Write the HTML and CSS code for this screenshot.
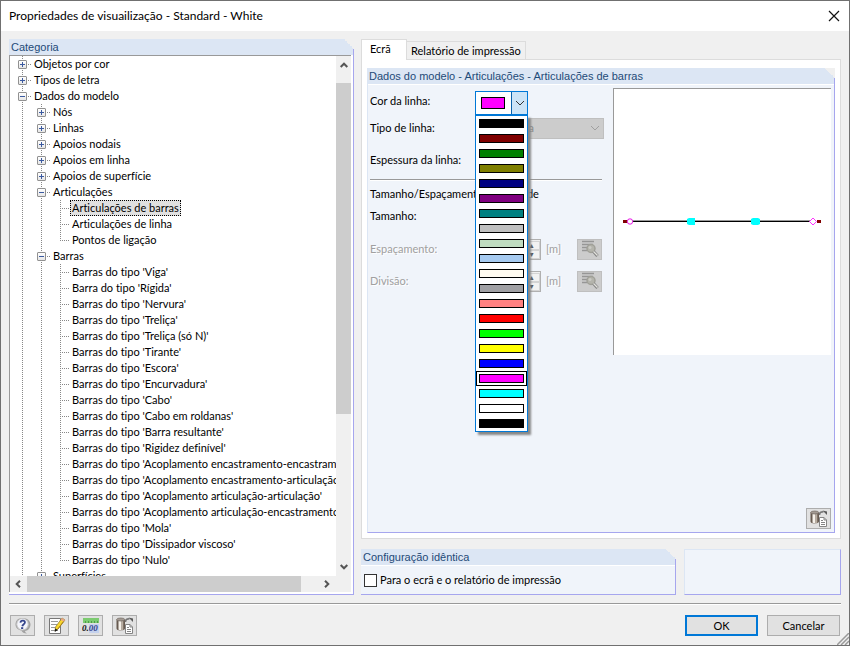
FILE: index.html
```html
<!DOCTYPE html>
<html lang="pt">
<head>
<meta charset="utf-8">
<meta name="viewport" content="width=device-width, initial-scale=1">
<title>Propriedades de visuailização - Standard - White</title>
<link rel="stylesheet" href="styles.css">
</head>
<body>
<svg class="defs" width="0" height="0" aria-hidden="true">
  <symbol id="i-copy" viewBox="0 0 18 18">
    <path d="M0.500 2.500v9c0 1.200 1.500 2 4 2s4.500-.8 4.500-2v-9z" fill="#675a50"/>
    <path d="M2.500 3h3v10.400l-3-.6z" fill="#f6f1ea"/>
    <path d="M5.500 3h1.800v10H5.500z" fill="#b9aea2"/>
    <ellipse cx="4.700" cy="2.500" rx="4" ry="1.500" fill="#a39a92" stroke="#6e665f" stroke-width=".7"/>
    <path d="M9.500 5c0-3 2-3.500 4-3" fill="none" stroke="#777" stroke-width="1.600"/>
    <path d="M12.500 0.500l4.500 1v3.500z" fill="#5a5a5a"/>
    <path d="M9.500 7.500h4.500l2.500 2.500v6.500h-7z" fill="#fff" stroke="#858585"/>
    <path d="M14 7.500V10h2.500M11 10.500h2M11 12.500h4M11 14.500h4" fill="none" stroke="#858585"/>
  </symbol>
  <symbol id="i-pick" viewBox="0 0 18 18">
    <path d="M1 1.500h12M1 4.500h11M1 7.500h5M1 10.500h5" stroke="#969696" stroke-width="1.300"/>
    <circle cx="10" cy="8.500" r="4" fill="#b4b4ac" stroke="#a0a098" stroke-width="1.500"/>
    <circle cx="9" cy="7.500" r="1.500" fill="#cacac4"/>
    <path d="M12.500 11.500l4 4.500" stroke="#858585" stroke-width="3.200"/>
    <path d="M12.500 11.500l4 4" stroke="#e2e2dc" stroke-width="1.300"/>
  </symbol>
  <symbol id="i-down" viewBox="0 0 10 10"><path d="M1 3l4 4 4-4" fill="none" stroke="currentColor"/></symbol>
  <symbol id="i-scroll" viewBox="0 0 10 10"><path d="M1.700 7L5 3.700 8.300 7" fill="none" stroke="#555" stroke-width="2"/></symbol>
</svg>
<div class="window">
  <header class="titlebar">
    <h1>Propriedades de visuailização - Standard - White</h1>
    <button class="close" type="button" aria-label="Fechar"><svg viewBox="0 0 12 12" width="12" height="12"><path d="M1 1l10 10M11 1L1 11" stroke="#111" stroke-width="1.200"/></svg></button>
  </header>

  <main class="content">
    <section class="group categories">
      <h2>Categoria</h2>
      <div class="treebox">
        <nav class="tree" aria-label="Categoria">
          <ul>
            <li><button class="toggle" type="button" aria-label="Expandir"></button><span>Objetos por cor</span></li>
            <li><button class="toggle" type="button" aria-label="Expandir"></button><span>Tipos de letra</span></li>
            <li><button class="toggle open" type="button" aria-label="Recolher"></button><span>Dados do modelo</span>
              <ul>
                <li><button class="toggle" type="button" aria-label="Expandir"></button><span>Nós</span></li>
                <li><button class="toggle" type="button" aria-label="Expandir"></button><span>Linhas</span></li>
                <li><button class="toggle" type="button" aria-label="Expandir"></button><span>Apoios nodais</span></li>
                <li><button class="toggle" type="button" aria-label="Expandir"></button><span>Apoios em linha</span></li>
                <li><button class="toggle" type="button" aria-label="Expandir"></button><span>Apoios de superfície</span></li>
                <li><button class="toggle open" type="button" aria-label="Recolher"></button><span>Articulações</span>
                  <ul>
                    <li><span class="selected">Articulações de barras</span></li>
                    <li><span>Articulações de linha</span></li>
                    <li><span>Pontos de ligação</span></li>
                  </ul>
                </li>
                <li><button class="toggle open" type="button" aria-label="Recolher"></button><span>Barras</span>
                  <ul>
                    <li><span>Barras do tipo 'Viga'</span></li>
                    <li><span>Barra do tipo 'Rígida'</span></li>
                    <li><span>Barras do tipo 'Nervura'</span></li>
                    <li><span>Barras do tipo 'Treliça'</span></li>
                    <li><span>Barras do tipo 'Treliça (só N)'</span></li>
                    <li><span>Barras do tipo 'Tirante'</span></li>
                    <li><span>Barras do tipo 'Escora'</span></li>
                    <li><span>Barras do tipo 'Encurvadura'</span></li>
                    <li><span>Barras do tipo 'Cabo'</span></li>
                    <li><span>Barras do tipo 'Cabo em roldanas'</span></li>
                    <li><span>Barras do tipo 'Barra resultante'</span></li>
                    <li><span>Barras do tipo 'Rigidez definível'</span></li>
                    <li><span>Barras do tipo 'Acoplamento encastramento-encastramento'</span></li>
                    <li><span>Barras do tipo 'Acoplamento encastramento-articulação'</span></li>
                    <li><span>Barras do tipo 'Acoplamento articulação-articulação'</span></li>
                    <li><span>Barras do tipo 'Acoplamento articulação-encastramento'</span></li>
                    <li><span>Barras do tipo 'Mola'</span></li>
                    <li><span>Barras do tipo 'Dissipador viscoso'</span></li>
                    <li><span>Barras do tipo 'Nulo'</span></li>
                  </ul>
                </li>
                <li><button class="toggle" type="button" aria-label="Expandir"></button><span>Superfícies</span></li>
              </ul>
            </li>
          </ul>
        </nav>
        <div class="vscroll">
          <svg class="up" width="10" height="10"><use href="#i-scroll"/></svg>
          <div class="track"><div class="thumb"></div></div>
          <svg class="down" width="10" height="10"><use href="#i-scroll"/></svg>
        </div>
        <div class="hscroll">
          <svg class="left" width="10" height="10"><use href="#i-scroll"/></svg>
          <div class="track"><div class="thumb"></div></div>
          <svg class="right" width="10" height="10"><use href="#i-scroll"/></svg>
        </div>
      </div>
    </section>

    <div class="side">
      <div class="tabs" role="tablist">
        <button class="tab active" type="button" role="tab" aria-selected="true">Ecrã</button>
        <button class="tab" type="button" role="tab" aria-selected="false">Relatório de impressão</button>
      </div>
      <div class="page">
        <section class="group model">
          <h2>Dados do modelo - Articulações - Articulações de barras</h2>
          <div class="model-body">
            <form class="form">
              <div class="row first">
                <label for="color">Cor da linha:</label>
                <div class="combo">
                  <button id="color" class="combo-button" type="button" aria-haspopup="listbox" aria-expanded="true">
                    <span class="current"></span>
                    <span class="arrow"><svg width="10" height="10"><use href="#i-down"/></svg></span>
                  </button>
                  <ul class="colors" role="listbox" aria-label="Cor da linha">
                    <li role="option"><i class="black"></i></li>
                    <li role="option"><i class="maroon"></i></li>
                    <li role="option"><i class="green"></i></li>
                    <li role="option"><i class="olive"></i></li>
                    <li role="option"><i class="navy"></i></li>
                    <li role="option"><i class="purple"></i></li>
                    <li role="option"><i class="teal"></i></li>
                    <li role="option"><i class="silver"></i></li>
                    <li role="option"><i class="mint"></i></li>
                    <li role="option"><i class="sky"></i></li>
                    <li role="option"><i class="cream"></i></li>
                    <li role="option"><i class="gray"></i></li>
                    <li role="option"><i class="salmon"></i></li>
                    <li role="option"><i class="red"></i></li>
                    <li role="option"><i class="lime"></i></li>
                    <li role="option"><i class="yellow"></i></li>
                    <li role="option"><i class="blue"></i></li>
                    <li role="option" aria-selected="true"><i class="magenta"></i></li>
                    <li role="option"><i class="cyan"></i></li>
                    <li role="option"><i class="white"></i></li>
                    <li role="option"><i class="black"></i></li>
                  </ul>
                </div>
              </div>
              <div class="row">
                <label for="type">Tipo de linha:</label>
                <div class="select">
                  <select id="type" disabled><option>Contínua</option></select>
                  <svg width="10" height="10"><use href="#i-down"/></svg>
                </div>
              </div>
              <div class="row weight"><label for="weight">Espessura da linha:</label><input id="weight" class="number" value="1"></div>
              <hr>
              <h3>Tamanho/Espaçamento da unidade</h3>
              <div class="row short"><label for="size">Tamanho:</label><input id="size" class="number" value="1"></div>
              <div class="row tall off">
                <label for="spacing">Espaçamento:</label>
                <div class="spin"><input id="spacing" disabled><span><button type="button" disabled aria-label="Mais">▲</button><button type="button" disabled aria-label="Menos">▼</button></span></div>
                <span class="unit">[m]</span>
                <button class="tool" type="button" disabled aria-label="Selecionar espaçamento"><svg width="18" height="18"><use href="#i-pick"/></svg></button>
              </div>
              <div class="row tall off">
                <label for="division">Divisão:</label>
                <div class="spin"><input id="division" disabled><span><button type="button" disabled aria-label="Mais">▲</button><button type="button" disabled aria-label="Menos">▼</button></span></div>
                <span class="unit">[m]</span>
                <button class="tool" type="button" disabled aria-label="Selecionar divisão"><svg width="18" height="18"><use href="#i-pick"/></svg></button>
              </div>
            </form>
            <div class="aside">
              <div class="preview">
                <svg viewBox="0 0 217 266" role="img" aria-label="Pré-visualização">
                  <path d="M16 131h184v1H16z" fill="#999"/>
                  <path d="M16 132h184v1H16z"/>
                  <path d="M9 131h5v3H9zM203 131h4v3h-4z" fill="#800000"/>
                  <circle cx="16" cy="132.500" r="2.700" fill="#fff" stroke="#e818e8"/>
                  <path d="M73 130l2-1h6v7h-6l-2-1zM137 130l2-1h5l2 1v5l-2 1h-5l-2-1z" fill="#0ff"/>
                  <path d="M199 129l3.500 3.500-3.500 3.500-3.500-3.500z" fill="#fff" stroke="#f3f"/>
                </svg>
              </div>
              <button class="tool" type="button" aria-label="Copiar"><svg width="18" height="18"><use href="#i-copy"/></svg></button>
            </div>
          </div>
        </section>
      </div>
      <div class="lower">
        <section class="group same">
          <h2>Configuração idêntica</h2>
          <label class="check"><input type="checkbox">Para o ecrã e o relatório de impressão</label>
        </section>
        <section class="group blank"></section>
      </div>
    </div>
  </main>

  <footer class="footer">
    <button class="tool" type="button" aria-label="Ajuda"><svg width="18" height="18" viewBox="0 0 18 18"><path d="M8.500 1c4.500 0 8 2.800 8 6.500S13.500 14 11 14c0 1 1 2 2 2.500-3 0-5-1.200-5.500-3C4 13 1.500 10.700 1.500 7.500 1.500 3.800 4 1 8.500 1z" fill="#a2a2a2"/><circle cx="8.500" cy="7.300" r="5.700" fill="#f4f5fb" stroke="#c9c9c9"/><path d="M6.400 5.700c.3-3 5-2.600 4.500 0C10.600 7.300 8.700 7.200 8.300 9.200" fill="none" stroke="#34448c" stroke-width="1.800"/><path d="M7.100 10.200h2.100v1.800H7.100z" fill="#34448c"/></svg></button>
    <button class="tool" type="button" aria-label="Editar"><svg width="18" height="18" viewBox="0 0 18 18"><path d="M1.500 1.500h11v15h-11z" fill="#fff" stroke="#777"/><path d="M3 4.500h7M3 7.500h6M3 10.500h4M3 13.500h7" stroke="#999"/><path d="M14 1l3 2-7 9-3 2 .5-4z" fill="#f9d72c" stroke="#85712a" stroke-width=".7"/><path d="M14 1l3 2-1.300 1.800-3-2z" fill="#e8a58c"/><path d="M7.300 11.500L6.700 15l3-2z" fill="#111"/><path d="M15.500 4.500l-6 8" stroke="#a8801e"/></svg></button>
    <button class="tool" type="button" aria-label="Unidades"><svg width="18" height="18" viewBox="0 0 18 18"><path d="M1 1h16v5H1z" fill="#7ccb70"/><path d="M3.500 4v2M6.500 4v2M9.500 4v2M12.500 4v2M15.500 4v2" stroke="#4e9a48"/><path d="M7 7h10v9H7z" fill="#c5d2ee"/><text x="0" y="14">0.<tspan class="decimals">00</tspan></text></svg></button>
    <button class="tool" type="button" aria-label="Copiar"><svg width="18" height="18"><use href="#i-copy"/></svg></button>
    <span class="fill"></span>
    <button class="action default" type="button">OK</button>
    <button class="action" type="button">Cancelar</button>
  </footer>
  <svg class="grip" width="12" height="12" viewBox="0 0 12 12" aria-hidden="true"><path d="M0 12L12 0M4 12l8-8M8 12l4-4" stroke="#999" stroke-width="1.500"/></svg>
</div>
</body>
</html>
```
FILE: styles.css
```css
* { box-sizing: border-box; }
body { margin: 0; font: 11px/16px Lato, "Liberation Sans", sans-serif; font-variant-ligatures: none; color: #000; background: #f0f0f0; }
button, input, select { font: inherit; font-variant-ligatures: none; color: inherit; margin: 0; padding: 0; }
ul { list-style: none; margin: 0; padding: 0; }
h1, h2, h3 { margin: 0; font: inherit; font-variant-ligatures: none; }
svg { display: block; }
.defs { position: absolute; }

.window { position: relative; display: flex; flex-direction: column; height: 100vh; min-height: 560px; border: 1px solid #707070; }
.titlebar { flex: none; display: flex; align-items: center; justify-content: space-between; height: 30px; padding: 0 9px 0 8px; background: #fff; }
.titlebar h1 { font-size: 12px; }
.close { border: 0; background: none; }

.content { flex: 1; min-height: 0; display: grid; grid-template-columns: minmax(0, 345fr) minmax(0, 480fr); gap: 7px; padding: 8px 8px 0; }

.group { position: relative; display: flex; flex-direction: column; background: #f0f4fa; border: solid #a6a6ee; border-width: 0 1px 1px 0; }
.group h2 { flex: none; height: 16px; padding-left: 2px; background: #dce6f4; color: #1e4a78; font-family: "Liberation Sans", Arial, sans-serif; white-space: nowrap; overflow: hidden; }
.group:not(.blank)::after { content: ""; position: absolute; top: 0; right: -1px; width: 10px; height: 10px; background: linear-gradient(45deg, transparent 50%, #f0f0f0 50%); }

.categories { min-height: 0; background: #fff; }
.treebox { flex: 1; min-height: 0; display: grid; grid-template: minmax(0, 1fr) 16px / minmax(0, 1fr) 15px; margin: 0 2px 2px 0; border: solid #999; border-width: 1px 0 0 1px; background: #f0f0f0; }
.tree { overflow: hidden; background: #fff; padding-left: 3px; white-space: nowrap; }
.tree li { position: relative; padding-left: 19px; }
.tree li > span { display: inline-block; height: 16px; padding: 0 2px; vertical-align: top; }
.tree li::before, .tree li::after { content: ""; position: absolute; left: 9px; }
.tree li::before { top: 0; bottom: 0; width: 1px; background: repeating-linear-gradient(#888 0 1px, transparent 1px 2px); }
.tree li li li:last-child::before { bottom: auto; height: 8px; }
.tree li::after { top: 8px; width: 10px; height: 1px; background: repeating-linear-gradient(90deg, #888 0 1px, transparent 1px 2px); }
.tree .selected { background: #e0e0e0; outline: 1px dotted #000; outline-offset: -1px; }
.toggle { position: absolute; z-index: 1; left: 5px; top: 4px; width: 9px; height: 9px; border: 1px solid #919191; border-radius: 1px; background: linear-gradient(#3b5aa0, #3b5aa0) center / 5px 1px no-repeat, linear-gradient(#3b5aa0, #3b5aa0) center / 1px 5px no-repeat, linear-gradient(#fff, #e6e6e6); }
.toggle.open { background: linear-gradient(#3b5aa0, #3b5aa0) center / 5px 1px no-repeat, linear-gradient(#fff, #e6e6e6); }
.vscroll { display: flex; flex-direction: column; align-items: center; padding: 4px 0; gap: 13px; }
.vscroll .track { flex: 1; align-self: stretch; }
.vscroll .thumb { height: 71%; background: #cdcdcd; }
.hscroll { grid-column: 1 / -1; display: flex; align-items: center; padding: 0 19px 0 3px; gap: 4px; }
.hscroll .track { flex: 1; align-self: stretch; display: flex; }
.hscroll .thumb { width: 94%; background: #cdcdcd; }
.down { transform: rotate(180deg); }
.left { transform: rotate(-90deg); }
.right { transform: rotate(90deg); }

.side { min-width: 0; min-height: 0; display: flex; flex-direction: column; }
.tabs { flex: none; display: flex; align-items: flex-end; }
.tab { height: 18px; padding: 0 4px; border: 1px solid #dcdcdc; border-bottom: 0; border-left: 0; background: #f0f0f0; white-space: nowrap; }
.tab.active { position: relative; z-index: 1; width: 46px; height: 21px; padding: 0 8px 2px; margin-bottom: -1px; border-left: 1px solid #dcdcdc; background: #fff; text-align: left; }
.page { flex: 1; min-height: 0; display: flex; border: 1px solid #dcdcdc; background: #fff; padding: 8px 5px 5px; }
.model { flex: 1; min-width: 0; border-left: 1px solid #dce6f4; }
.model h2 { padding-left: 1px; }
.model h2, .same h2 { height: 17px; border-bottom: 1px solid #fff; }
.model-body { flex: 1; display: grid; grid-template-columns: 234px minmax(0, 1fr); gap: 9px; padding: 3px 3px 3px 2px; }
.form { min-width: 0; }
.row { display: flex; align-items: center; height: 28px; }
.row label { width: 105px; flex: none; white-space: nowrap; }
.row.first { height: 26px; }
.row.weight { height: 36px; }
.row.tall { height: 32px; }
.row.short { height: 24px; margin-bottom: 5px; }
.form hr { height: 1px; margin: 1px 2px 4px 0; border: 0; background: #999; box-shadow: 0 1px #fff; }
.form h3 { line-height: 20px; white-space: nowrap; }
.off { color: #a0a0a0; text-shadow: 1px 1px #fff; }

.combo { position: relative; width: 53px; margin-top: 4px; }
.combo-button { display: flex; width: 100%; height: 24px; border: 1px solid #0078d7; background: #fff; }
.combo-button .current { flex: 1; height: 12px; margin: 5px 6px 0 5px; border: 1px solid #000; background: #f0f; }
.combo-button .arrow { display: grid; place-items: center; width: 16px; height: 22px; border-left: 1px solid #0a62ab; background: #cce4f7; color: #333; }
.colors { position: absolute; z-index: 5; top: 100%; left: 0; right: 0; border: 1px solid #0078d7; background: #fff; box-shadow: 3px 3px 2px #888; }
.colors li { height: 15px; padding: 3px; }
.colors i { display: block; height: 9px; border: 1px solid #000; }
.colors [aria-selected] { border: 1px solid #000; padding: 2px; }
.black { background: #000; } .maroon { background: #800000; } .green { background: #008000; }
.olive { background: #808000; } .navy { background: #000080; } .purple { background: #800080; }
.teal { background: #008080; } .silver { background: #c0c0c0; } .mint { background: #c0dcc0; }
.sky { background: #a6caf0; } .cream { background: #fffbf0; } .gray { background: #a0a0a4; }
.salmon { background: #ff8080; } .red { background: #f00; } .lime { background: #0f0; }
.yellow { background: #ff0; } .blue { background: #00f; } .magenta { background: #f0f; }
.cyan { background: #0ff; } .white { background: #fff; }

.select { position: relative; flex: 1; color: #a0a0a0; }
.select select { appearance: none; display: block; width: 100%; height: 21px; padding-left: 14px; border: 1px solid #bfbfbf; border-radius: 0; background: #ccc; color: #888; opacity: 1; }
.select svg { position: absolute; right: 4px; top: 5px; }
.number { width: 50px; height: 20px; border: 1px solid #aaa; background: #fff; padding: 0 4px; }
.spin { display: flex; width: 66px; height: 21px; border: 1px solid #b0b0b0; background: #f0f0f0; }
.spin input { flex: 1; min-width: 0; border: 0; background: none; }
.spin span { display: flex; flex-direction: column; width: 17px; padding: 1px 0; }
.spin button { flex: 1; border: 1px solid #d4d4d4; background: #f2f2f2; color: #555; font-size: 7px; line-height: 7px; text-shadow: none; }
.unit { flex: 1; padding-left: 5px; }
.tool { display: grid; place-items: center; flex: none; width: 25px; height: 21px; border: 1px solid #adadad; background: #e1e1e1; }
.tool:disabled { background: #ccc; border-color: #bfbfbf; }
.row .tool { margin-right: 2px; }
.aside { min-width: 0; display: flex; flex-direction: column; justify-content: space-between; align-items: flex-end; }
.preview { width: 100%; border: solid #999; border-width: 1px 0 0 1px; background: #fff; }

.lower { flex: none; display: grid; grid-template-columns: 315fr 157fr; gap: 8px; height: 46px; margin-top: 10px; }
.check { flex: 1; display: flex; align-items: center; gap: 3px; padding-left: 3px; }
.check input { appearance: none; width: 13px; height: 13px; border: 1px solid #333; background: #fff; }
.blank { border-top: 1px solid #dce6f4; border-left: 1px solid #dce6f4; }

.footer { flex: none; display: flex; gap: 9px; margin: 8px 8px 0; padding: 11px 1px 9px; border-top: 1px solid #999; box-shadow: inset 0 1px #fff; }
.fill { flex: 1; }
.footer text { font: italic bold 9px/10px "Liberation Serif", serif; fill: #111; }
.footer .decimals { fill: #34448c; }
.action { width: 73px; height: 21px; border: 1px solid #adadad; background: #e1e1e1; }
.action.default { border: 2px solid #0078d7; }
.grip { position: absolute; right: 0; bottom: 0; }
```
